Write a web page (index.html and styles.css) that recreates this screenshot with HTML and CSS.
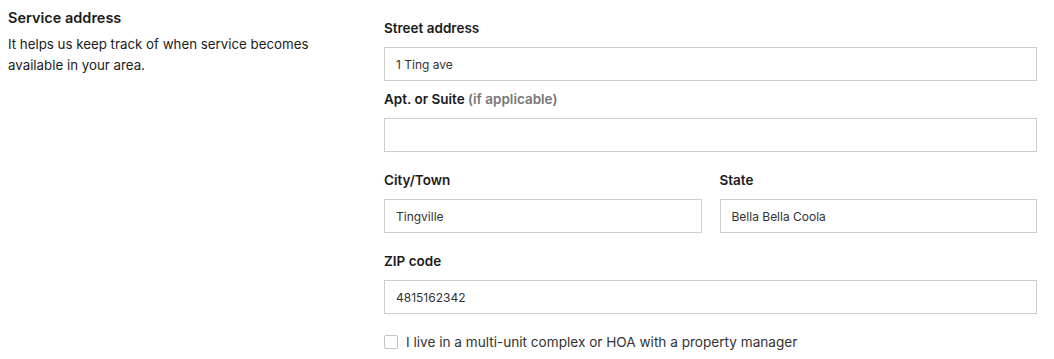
FILE: index.html
```html
<!DOCTYPE html>
<html>
<head>
    <link rel="stylesheet" href="styles.css">
</head>
<body>
    <div class="section">
        <!-- Left intro column -->
        <div class="intro">
            <h3 class="intro-title">Service address</h3>
            <p class="intro-text">It helps us keep track of when service becomes available in your area.</p>
        </div>

        <!-- Address form -->
        <form class="address-form">
            <div class="field first">
                <label for="street">Street address</label>
                <input type="text" id="street" value="1 Ting ave">
            </div>
            <div class="field">
                <label for="apt">Apt. or Suite <span class="optional">(if applicable)</span></label>
                <input type="text" id="apt" value="">
            </div>

            <div class="field-row">
                <div class="field">
                    <label for="city">City/Town</label>
                    <input type="text" id="city" value="Tingville">
                </div>
                <div class="field">
                    <label for="state">State</label>
                    <input type="text" id="state" value="Bella Bella Coola">
                </div>
            </div>

            <div class="field">
                <label for="zip">ZIP code</label>
                <input type="text" id="zip" value="4815162342">
            </div>

            <label class="check">
                <input type="checkbox" id="multiUnit">
                <span>I live in a multi-unit complex or HOA with a property manager</span>
            </label>
        </form>
    </div>
</body>
</html>
```
FILE: styles.css
```css
body {
    margin: 8px;
    font-family: Inter, Lato, sans-serif;
    color: #1b1b1b;
    background: #ffffff;
}
.section {
    display: flex;
    padding-right: 9px;
}
.intro {
    width: 376px;
    flex-shrink: 0;
    padding-top: 0;
}
.intro-title {
    margin: 0;
    font-size: 14.5px;
    line-height: 20px;
    font-weight: 600;
}
.intro-text {
    margin: 6px 0 0 0;
    font-size: 13.3px;
    line-height: 21px;
    width: 320px;
}
.address-form {
    flex: 1;
    padding-top: 10px;
}
.field {
    display: flex;
    flex-direction: column;
    margin-bottom: 18px;
}
.field.first {
    margin-bottom: 8px;
}
.field label {
    font-size: 13.5px;
    font-weight: 600;
    line-height: 20px;
    margin-bottom: 9px;
}
.optional {
    color: #777777;
}
.field input {
    height: 34px;
    box-sizing: border-box;
    border: 1px solid #cccccc;
    border-radius: 0;
    padding: 0 11px;
    font-family: inherit;
    font-size: 12px;
    color: #333333;
    outline: none;
}
.field-row {
    display: flex;
    gap: 18px;
}
.field-row .field {
    flex: 1;
}
.check {
    display: flex;
    align-items: center;
    gap: 8px;
    font-size: 13.6px;
    color: #333333;
    margin-top: 20px;
}
.check input {
    width: 14px;
    height: 14px;
    margin: 0;
    appearance: none;
    border: 1px solid #c4c4c4;
    border-radius: 2px;
    background: #ffffff;
}
```
